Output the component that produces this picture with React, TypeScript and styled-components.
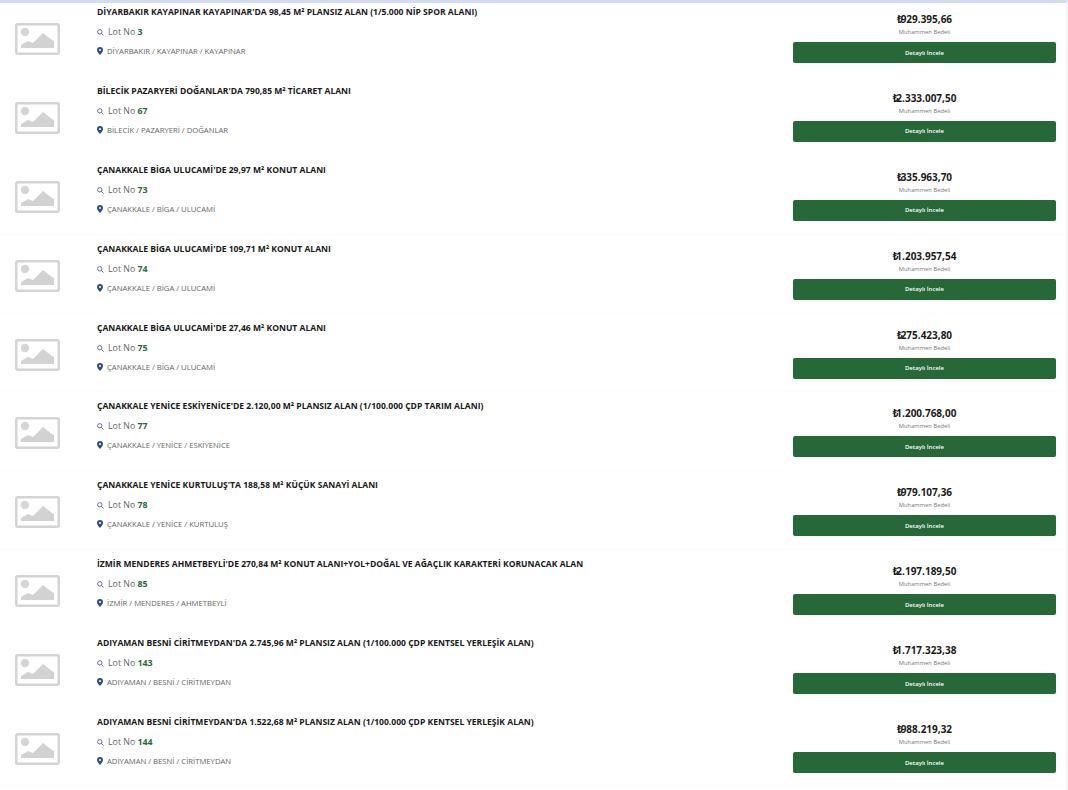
import { createGlobalStyle } from "styled-components";
import styled from "styled-components";

const lots = [
    { title: "DİYARBAKIR KAYAPINAR KAYAPINAR'DA 98,45 M² PLANSIZ ALAN (1/5.000 NİP SPOR ALANI)", lot: 3, place: "DİYARBAKIR / KAYAPINAR / KAYAPINAR", price: "929.395,66" },
    { title: "BİLECİK PAZARYERİ DOĞANLAR'DA 790,85 M² TİCARET ALANI", lot: 67, place: "BİLECİK / PAZARYERİ / DOĞANLAR", price: "2.333.007,50" },
    { title: "ÇANAKKALE BİGA ULUCAMİ'DE 29,97 M² KONUT ALANI", lot: 73, place: "ÇANAKKALE / BİGA / ULUCAMİ", price: "335.963,70" },
    { title: "ÇANAKKALE BİGA ULUCAMİ'DE 109,71 M² KONUT ALANI", lot: 74, place: "ÇANAKKALE / BİGA / ULUCAMİ", price: "1.203.957,54" },
    { title: "ÇANAKKALE BİGA ULUCAMİ'DE 27,46 M² KONUT ALANI", lot: 75, place: "ÇANAKKALE / BİGA / ULUCAMİ", price: "275.423,80" },
    { title: "ÇANAKKALE YENİCE ESKİYENİCE'DE 2.120,00 M² PLANSIZ ALAN (1/100.000 ÇDP TARIM ALANI)", lot: 77, place: "ÇANAKKALE / YENİCE / ESKİYENİCE", price: "1.200.768,00" },
    { title: "ÇANAKKALE YENİCE KURTULUŞ'TA 188,58 M² KÜÇÜK SANAYİ ALANI", lot: 78, place: "ÇANAKKALE / YENİCE / KURTULUŞ", price: "979.107,36" },
    { title: "İZMİR MENDERES AHMETBEYLİ'DE 270,84 M² KONUT ALANI+YOL+DOĞAL VE AĞAÇLIK KARAKTERİ KORUNACAK ALAN", lot: 85, place: "İZMİR / MENDERES / AHMETBEYLİ", price: "2.197.189,50" },
    { title: "ADIYAMAN BESNİ CİRİTMEYDAN'DA 2.745,96 M² PLANSIZ ALAN (1/100.000 ÇDP KENTSEL YERLEŞİK ALAN)", lot: 143, place: "ADIYAMAN / BESNİ / CİRİTMEYDAN", price: "1.717.323,38" },
    { title: "ADIYAMAN BESNİ CİRİTMEYDAN'DA 1.522,68 M² PLANSIZ ALAN (1/100.000 ÇDP KENTSEL YERLEŞİK ALAN)", lot: 144, place: "ADIYAMAN / BESNİ / CİRİTMEYDAN", price: "988.219,32" },
];

const GlobalStyle = createGlobalStyle`
    html, body {
        margin: 0;
        padding: 0;
        background: #fff;
        font-family: "Open Sans", "Noto Sans", sans-serif;
    }
`;

const Page = styled.div`
    width: 1068px;
    height: 790px;
    overflow: hidden;
    border-top: 3px solid #d3dcf0;
    border-right: 2px solid #f5f5f7;
    box-sizing: border-box;
    background: #fff;
`;

const Row = styled.div`
    height: 73.9px;
    margin-bottom: 5px;
    box-sizing: border-box;
    display: grid;
    grid-template-columns: 97px 1fr 263px;
    padding-right: 10px;
    border-bottom: 1px solid #fbfbfb;
`;

const Thumb = styled.div`
    padding: 20px 0 0 15px;
    filter: blur(0.35px);
`;

const Info = styled.div`
    display: flex;
    flex-direction: column;
    padding-top: 4px;
`;

const Title = styled.div`
    font-size: 8.55px;
    font-weight: 700;
    line-height: 11px;
    color: #1a1a1a;
    white-space: nowrap;
`;

const LotLine = styled.div`
    display: flex;
    align-items: center;
    gap: 4px;
    margin-top: 9px;
    font-size: 8.8px;
    line-height: 11px;
    color: #666;
`;

const LotNumber = styled.b`
    font-weight: 700;
    color: #2a6a3a;
`;

const PlaceLine = styled.div`
    display: flex;
    align-items: center;
    gap: 4px;
    margin-top: 8px;
    font-size: 7.7px;
    line-height: 10px;
    color: #666;
`;

const Side = styled.div`
    display: flex;
    flex-direction: column;
    align-items: stretch;
    text-align: center;
    padding-top: 9px;
`;

const Price = styled.div`
    font-size: 10px;
    font-weight: 700;
    line-height: 14px;
    color: #1a1a1a;
`;

const Currency = styled.span`
    margin-right: -2px;
`;

const PriceLabel = styled.div`
    font-size: 5.8px;
    line-height: 8px;
    margin-top: 2px;
    color: #777;
`;

const DetailButton = styled.button`
    height: 21px;
    margin-top: 6px;
    padding: 0;
    border: 0;
    border-radius: 2px;
    background: #266837;
    color: #fff;
    font-family: inherit;
    font-size: 6px;
    font-weight: 600;
`;

const PlaceholderIcon = () => (
    <svg width="45" height="32" viewBox="0 0 45 32">
        <rect x="1.25" y="1.25" width="42.5" height="29.5" rx="1.5" fill="#fff" stroke="#d4d4d4" strokeWidth="2.5" />
        <circle cx="10" cy="9" r="4.2" fill="#d6d6d6" />
        <path d="M6 25v-3l7-4 5 2 10-10 9 7 2 1v7z" fill="#d2d2d2" />
    </svg>
);

const SearchIcon = () => (
    <svg width="7" height="7" viewBox="0 0 8 8" fill="none" stroke="#5a6a90" strokeWidth="1.1">
        <circle cx="3.2" cy="3.2" r="2.5" />
        <path d="M5 5l2.5 2.5" />
    </svg>
);

const PinIcon = () => (
    <svg width="6" height="8" viewBox="0 0 6 8">
        <path fillRule="evenodd" fill="#2f4f7a" d="M3 0a3 3 0 0 1 3 3c0 2-3 5-3 5S0 5 0 3a3 3 0 0 1 3-3zm0 2a1 1 0 1 0 0 2 1 1 0 0 0 0-2z" />
    </svg>
);

export default function App() {
    return (
        <>
            <GlobalStyle />
            <Page>
                {lots.map((item) => (
                    <Row key={item.lot}>
                        <Thumb><PlaceholderIcon /></Thumb>
                        <Info>
                            <Title>{item.title}</Title>
                            <LotLine><SearchIcon /><span>Lot No <LotNumber>{item.lot}</LotNumber></span></LotLine>
                            <PlaceLine><PinIcon /><span>{item.place}</span></PlaceLine>
                        </Info>
                        <Side>
                            <Price><Currency>₺</Currency>{item.price}</Price>
                            <PriceLabel>Muhammen Bedeli</PriceLabel>
                            <DetailButton>Detaylı İncele</DetailButton>
                        </Side>
                    </Row>
                ))}
            </Page>
        </>
    );
}
